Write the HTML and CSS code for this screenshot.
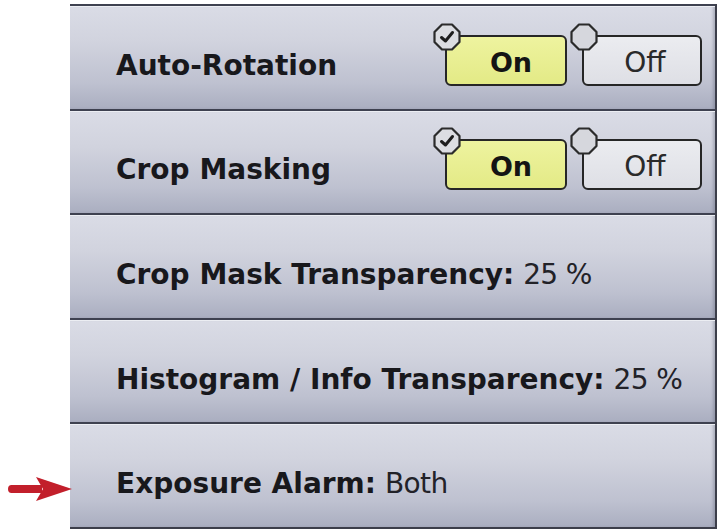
FILE: index.html
```html
<!DOCTYPE html>
<html>
<head>
<meta charset="utf-8">
<link rel="stylesheet" href="styles.css">
</head>
<body>
<div class="panel">
  <div class="row">
    <span class="label"><b>Auto-Rotation</b></span>
    <div class="toggles">
      <div class="btn on">
        <svg class="radio" viewBox="0 0 28 28" width="28" height="28"><polygon points="9,1.5 19,1.5 26.5,9 26.5,19 19,26.5 9,26.5 1.5,19 1.5,9" fill="#dcdde2" stroke="#2b2b2b" stroke-width="2.2" stroke-linejoin="round"/><path d="M8.5 14.5 L12.5 18 L19.5 9.5" fill="none" stroke="#1e1e1e" stroke-width="3" stroke-linecap="round" stroke-linejoin="round"/></svg>
        <span>On</span>
      </div>
      <div class="btn off">
        <svg class="radio" viewBox="0 0 28 28" width="28" height="28"><polygon points="9,1.5 19,1.5 26.5,9 26.5,19 19,26.5 9,26.5 1.5,19 1.5,9" fill="#d6d7dd" stroke="#2b2b2b" stroke-width="2.2" stroke-linejoin="round"/></svg>
        <span>Off</span>
      </div>
    </div>
  </div>
  <div class="row">
    <span class="label"><b>Crop Masking</b></span>
    <div class="toggles">
      <div class="btn on">
        <svg class="radio" viewBox="0 0 28 28" width="28" height="28"><polygon points="9,1.5 19,1.5 26.5,9 26.5,19 19,26.5 9,26.5 1.5,19 1.5,9" fill="#dcdde2" stroke="#2b2b2b" stroke-width="2.2" stroke-linejoin="round"/><path d="M8.5 14.5 L12.5 18 L19.5 9.5" fill="none" stroke="#1e1e1e" stroke-width="3" stroke-linecap="round" stroke-linejoin="round"/></svg>
        <span>On</span>
      </div>
      <div class="btn off">
        <svg class="radio" viewBox="0 0 28 28" width="28" height="28"><polygon points="9,1.5 19,1.5 26.5,9 26.5,19 19,26.5 9,26.5 1.5,19 1.5,9" fill="#d6d7dd" stroke="#2b2b2b" stroke-width="2.2" stroke-linejoin="round"/></svg>
        <span>Off</span>
      </div>
    </div>
  </div>
  <div class="row">
    <span class="label"><b>Crop Mask Transparency:</b> <span class="val">25 %</span></span>
  </div>
  <div class="row">
    <span class="label"><b>Histogram / Info Transparency:</b> <span class="val">25 %</span></span>
  </div>
  <div class="row last">
    <svg class="arrow" viewBox="0 0 64 24" width="64" height="24"><path d="M3.5 8 L34 8 L34 16 L3.5 16 Q0 16 0 12 Q0 8 3.5 8 Z" fill="#c21f2b"/><path d="M28 0 L64 12 L28 24 L35 12 Z" fill="#c21f2b"/></svg>
    <span class="label"><b>Exposure Alarm:</b> <span class="val">Both</span></span>
  </div>
</div>
</body>
</html>
```

FILE: styles.css
```css
html, body {
  margin: 0;
  padding: 0;
  background: #ffffff;
}

body {
  width: 721px;
  height: 529px;
  overflow: hidden;
  font-family: "DejaVu Sans", Verdana, sans-serif;
  color: #18181c;
}

.panel {
  margin: 4px 0 0 70px;
  width: 647px;
  height: 525px;
  box-sizing: border-box;
  border-right: 2px solid #3c3e4a;
  border-bottom: 2px solid #3c3e4a;
  display: flex;
  flex-direction: column;
}

.row {
  position: relative;
  flex: 1;
  box-sizing: border-box;
  border-top: 2px solid #3e4150;
  background: linear-gradient(180deg, #dadce6 0%, #d1d3de 35%, #bec1d0 75%, #aaaec0 100%);
  box-shadow: inset 0 1px 0 #eceef3, inset -3px 0 3px -1px rgba(90,94,115,0.35);
  display: flex;
  align-items: center;
  justify-content: space-between;
  padding: 0 13px 0 46px;
}

.label {
  font-size: 28px;
  padding-top: 16px;
  white-space: nowrap;
}

.label b {
  font-weight: bold;
}

.val {
  letter-spacing: -0.6px;
  color: #222228;
}

.toggles {
  display: flex;
  gap: 15px;
  padding-top: 6px;
}

.btn {
  position: relative;
  height: 51px;
  box-sizing: border-box;
  border: 2px solid #262626;
  border-radius: 6px;
  display: flex;
  align-items: center;
  justify-content: center;
  font-size: 27px;
  padding-top: 4px;
}

.btn.on {
  width: 122px;
  background: linear-gradient(180deg, #eef39f 0%, #e3ea86 100%);
  font-weight: bold;
  color: #141414;
  padding-left: 10px;
}

.btn.off {
  width: 120px;
  background: linear-gradient(180deg, #ebecf0 0%, #dedfe5 100%);
  color: #2a2a2a;
  padding-left: 6px;
  font-size: 28px;
}

.radio {
  position: absolute;
  left: -14px;
  top: -14px;
}

.arrow {
  position: absolute;
  left: -62px;
  top: 53px;
}
```
